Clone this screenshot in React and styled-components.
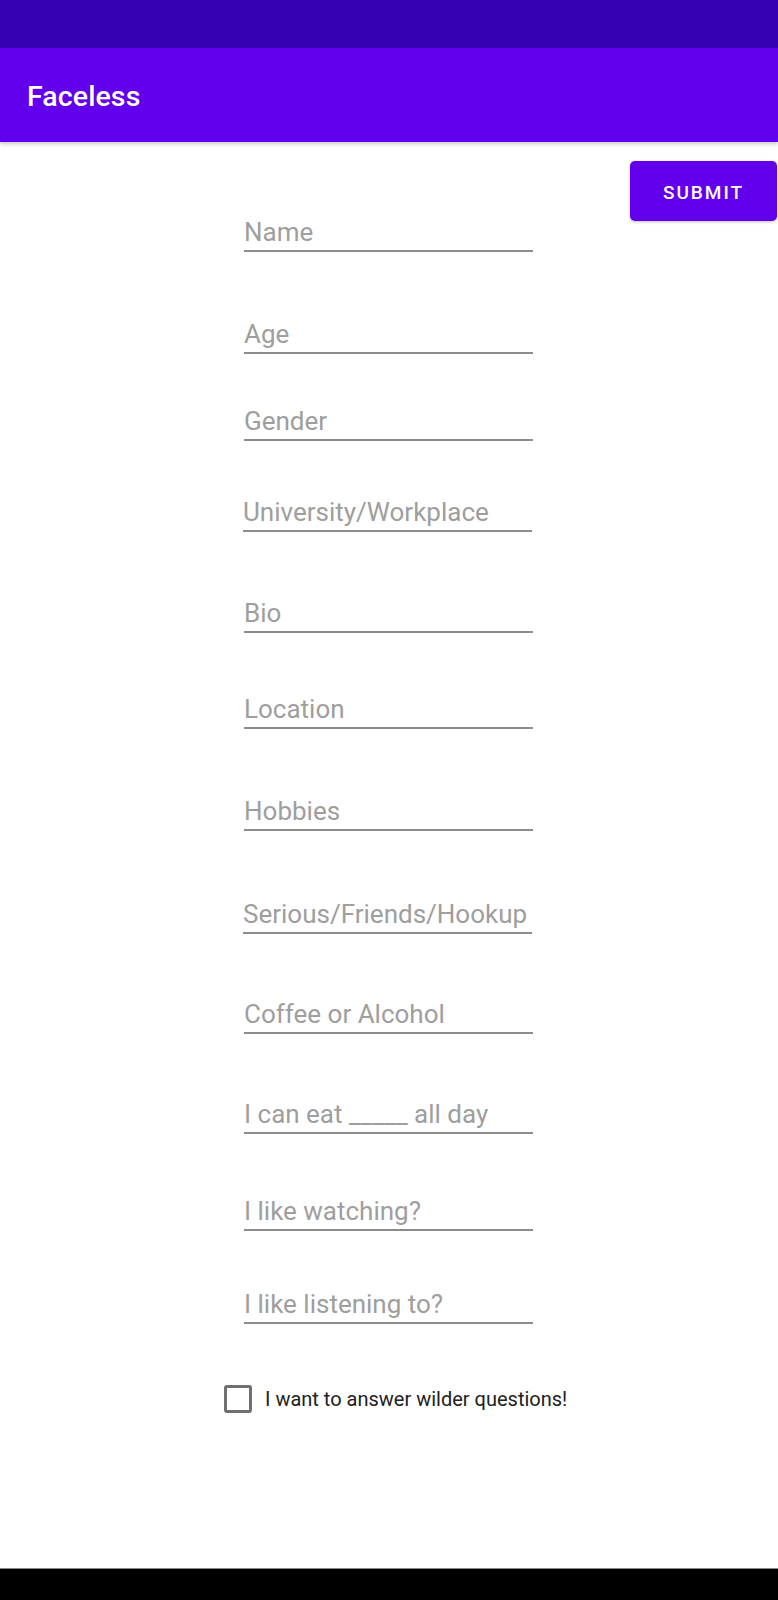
import styled, { createGlobalStyle } from "styled-components";

const GlobalStyle = createGlobalStyle`
  html, body {
    margin: 0;
    padding: 0;
    background: #ffffff;
  }

  body {
    font-family: Roboto, "Noto Sans", "Liberation Sans", sans-serif;
  }
`;

const Screen = styled.div`
  display: flex;
  flex-direction: column;
  width: 778px;
  height: 1600px;
  overflow: hidden;
  background: #ffffff;
`;

const StatusBar = styled.div`
  height: 48px;
  flex-shrink: 0;
  background: #3700b3;
`;

const AppBar = styled.header`
  position: relative;
  z-index: 1;
  display: flex;
  align-items: center;
  height: 94px;
  flex-shrink: 0;
  padding-left: 27px;
  background: #6200ee;
  box-shadow: 0 2px 4px rgba(0, 0, 0, 0.22);
`;

const Title = styled.h1`
  margin: 0;
  padding-top: 2px;
  color: #ffffff;
  font-size: 28.5px;
  font-weight: 500;
  letter-spacing: 0.1px;
`;

const Content = styled.main`
  flex: 1;
  display: flex;
  align-items: flex-start;
  padding-left: 244px;
`;

const Form = styled.form`
  display: flex;
  flex-direction: column;
  align-items: flex-start;
  width: 289px;
`;

const Field = styled.input`
  box-sizing: border-box;
  width: 289px;
  height: 38px;
  margin: ${({ $gap }) => $gap}px 0 0 ${({ $nudge }) => $nudge || 0}px;
  padding: 0;
  border: none;
  border-bottom: 2px solid #8c8c8c;
  outline: none;
  background: transparent;
  color: #212121;
  font-family: Roboto, "Noto Sans", sans-serif;
  font-size: 26px;

  &::placeholder {
    color: #9e9e9e;
  }
`;

const CheckRow = styled.label`
  display: flex;
  align-items: center;
  gap: 13px;
  margin: 61px 0 0 -20px;
  white-space: nowrap;
  color: #212121;
  font-size: 20px;
`;

const CheckBox = styled.input`
  appearance: none;
  box-sizing: border-box;
  width: 28px;
  height: 28px;
  margin: 0;
  border: 3px solid #707070;
  border-radius: 3px;
  background: #ffffff;
`;

const SubmitButton = styled.button`
  width: 147px;
  height: 60px;
  margin: 19px 1px 0 auto;
  padding: 2px 0 0;
  border: none;
  border-radius: 5px;
  background: #6200ee;
  color: #ffffff;
  font-family: Roboto, "Noto Sans", sans-serif;
  font-size: 19px;
  font-weight: 500;
  letter-spacing: 2px;
  box-shadow: 0 1px 3px rgba(0, 0, 0, 0.25);
`;

const NavBar = styled.div`
  height: 31px;
  flex-shrink: 0;
  background: #000000;
  border-top: 1px solid #8a8a8a;
`;

const fields = [
  { hint: "Name", gap: 72 },
  { hint: "Age", gap: 64 },
  { hint: "Gender", gap: 49 },
  { hint: "University/Workplace", gap: 53, nudge: -1 },
  { hint: "Bio", gap: 63 },
  { hint: "Location", gap: 58 },
  { hint: "Hobbies", gap: 64 },
  { hint: "Serious/Friends/Hookup", gap: 65, nudge: -1 },
  { hint: "Coffee or Alcohol", gap: 62 },
  { hint: "I can eat _____ all day", gap: 62 },
  { hint: "I like watching?", gap: 59 },
  { hint: "I like listening to?", gap: 55 },
];

export default function App() {
  return (
    <>
      <GlobalStyle />
      <Screen>
        <StatusBar />
        <AppBar>
          <Title>Faceless</Title>
        </AppBar>
        <Content>
          <Form onSubmit={(e) => e.preventDefault()}>
            {fields.map((f) => (
              <Field key={f.hint} placeholder={f.hint} $gap={f.gap} $nudge={f.nudge} />
            ))}
            <CheckRow>
              <CheckBox type="checkbox" />
              I want to answer wilder questions!
            </CheckRow>
          </Form>
          <SubmitButton type="button">SUBMIT</SubmitButton>
        </Content>
        <NavBar />
      </Screen>
    </>
  );
}
